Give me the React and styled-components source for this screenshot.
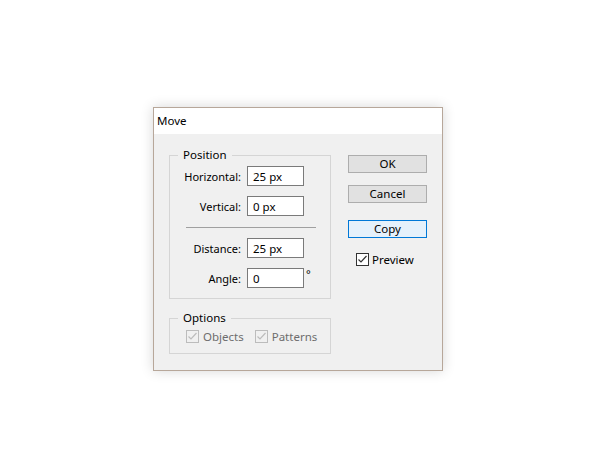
import React from "react";
import styled, { createGlobalStyle } from "styled-components";

const GlobalStyle = createGlobalStyle`
  html, body {
    margin: 0;
    padding: 0;
    background: #ffffff;
  }
  body {
    font-family: "Segoe UI", "Noto Sans", "Liberation Sans", sans-serif;
    font-size: 11px;
    color: #000;
  }
`;

const Page = styled.div`
  padding: 107px 0 0 153px;
  height: 461px;
  box-sizing: border-box;
`;

const Dialog = styled.div`
  width: 290px;
  box-sizing: border-box;
  border: 1px solid #b7a79a;
  background: #f0f0f0;
  box-shadow: 0 0 12px rgba(0, 0, 0, 0.16);
`;

const TitleBar = styled.div`
  height: 26px;
  line-height: 25px;
  background: #ffffff;
  padding-left: 3px;
  font-size: 11.5px;
`;

const Body = styled.div`
  display: grid;
  grid-template-columns: 162px 79px;
  column-gap: 17px;
  padding: 21px 15px 16px 15px;
`;

const LeftCol = styled.div`
  display: flex;
  flex-direction: column;
  gap: 19px;
`;

const Group = styled.div`
  position: relative;
  border: 1px solid #d5d5d5;
  padding: ${(p) => p.$pad};
  display: flex;
  flex-direction: column;
`;

const Legend = styled.span`
  position: absolute;
  top: -9px;
  left: 8px;
  padding: 0 5px;
  background: #f0f0f0;
  line-height: 16px;
  font-size: 11.5px;
`;

const Field = styled.div`
  display: grid;
  grid-template-columns: 72px 57px auto;
  column-gap: 5px;
  align-items: center;
  height: 20px;
  margin-bottom: ${(p) => p.$mb || 0}px;
`;

const Label = styled.span`
  text-align: right;
  padding-right: 1px;
`;

const Input = styled.input`
  box-sizing: border-box;
  width: 57px;
  height: 20px;
  margin: 0;
  border: 1px solid #7a7a7a;
  background: #fff;
  padding: 0 0 0 5px;
  font: inherit;
  font-size: 11.5px;
  color: #000;
  outline: none;
`;

const Unit = styled.span`
  margin-left: -3px;
  align-self: start;
  line-height: 12px;
`;

const Separator = styled.div`
  height: 1px;
  background: #a0a0a0;
  margin: 11px 14px 10px 16px;
`;

const CheckRow = styled.div`
  display: flex;
  align-items: center;
  gap: 11px;
  height: 16px;
`;

const Check = styled.label`
  display: flex;
  align-items: center;
  gap: ${(p) => (p.$disabled ? 4 : 3)}px;
  font-size: 11.5px;
  color: ${(p) => (p.$disabled ? "#6d6d6d" : "#000")};
`;

const Box = styled.span`
  width: 13px;
  height: 13px;
  box-sizing: border-box;
  border: 1px solid ${(p) => (p.$disabled ? "#bcbcbc" : "#333333")};
  background: ${(p) => (p.$disabled ? "#f0f0f0" : "#ffffff")};
  display: flex;
  align-items: center;
  justify-content: center;
`;

const RightCol = styled.div`
  display: flex;
  flex-direction: column;
`;

const Button = styled.button`
  box-sizing: border-box;
  width: 79px;
  height: 18px;
  margin: 0 0 ${(p) => p.$mb || 0}px 0;
  padding: 0;
  border: 1px solid ${(p) => (p.$focused ? "#0078d7" : "#adadad")};
  background: ${(p) => (p.$focused ? "#e5f1fb" : "#e1e1e1")};
  font: inherit;
  font-size: 11.5px;
  line-height: 16px;
  color: #000;
`;

const PreviewWrap = styled.div`
  padding-left: 8px;
  margin-top: 14px;
`;

const CheckBox = ({ disabled, label }) => (
  <Check $disabled={disabled}>
    <Box $disabled={disabled}>
      <svg width="11" height="11" viewBox="0 0 11 11">
        <path
          d="M1.5 5.5 L4 8 L9.5 2"
          fill="none"
          stroke={disabled ? "#bcbcbc" : "#333333"}
          strokeWidth="1.2"
        />
      </svg>
    </Box>
    {label}
  </Check>
);

export default function App() {
  return (
    <Page>
      <GlobalStyle />
      <Dialog>
        <TitleBar>Move</TitleBar>
        <Body>
          <LeftCol>
            <Group $pad="10px 0 10px 0">
              <Legend>Position</Legend>
              <Field $mb={10}>
                <Label>Horizontal:</Label>
                <Input defaultValue="25 px" />
              </Field>
              <Field>
                <Label>Vertical:</Label>
                <Input defaultValue="0 px" />
              </Field>
              <Separator />
              <Field $mb={10}>
                <Label>Distance:</Label>
                <Input defaultValue="25 px" />
              </Field>
              <Field>
                <Label>Angle:</Label>
                <Input defaultValue="0" />
                <Unit>°</Unit>
              </Field>
            </Group>
            <Group $pad="9px 0 9px 16px">
              <Legend>Options</Legend>
              <CheckRow>
                <CheckBox disabled label="Objects" />
                <CheckBox disabled label="Patterns" />
              </CheckRow>
            </Group>
          </LeftCol>
          <RightCol>
            <Button $mb={12}>OK</Button>
            <Button $mb={17}>Cancel</Button>
            <Button $focused>Copy</Button>
            <PreviewWrap>
              <CheckBox label="Preview" />
            </PreviewWrap>
          </RightCol>
        </Body>
      </Dialog>
    </Page>
  );
}
